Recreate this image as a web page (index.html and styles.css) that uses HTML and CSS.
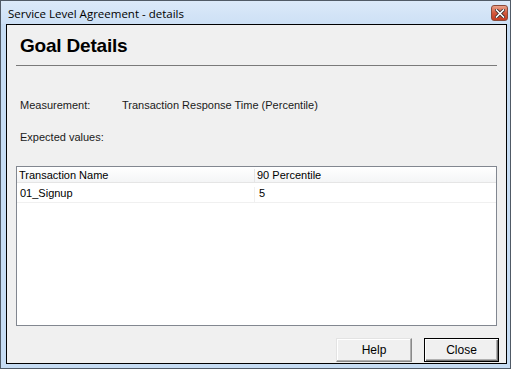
FILE: index.html
```html
<!DOCTYPE html>
<html lang="en">
<head>
    <meta charset="UTF-8">
    <title>Service Level Agreement - details</title>
    <link rel="stylesheet" href="styles.css">
</head>
<body>
    <div class="window">
        <div class="titlebar">
            <span class="title">Service Level Agreement - details</span>
            <span class="close-x">
                <svg width="10" height="9" viewBox="0 0 10 9">
                    <path d="M1.5 1 L8.5 8 M8.5 1 L1.5 8" stroke="#3a2a2a" stroke-width="3.2" stroke-linecap="square"/>
                    <path d="M1.5 1 L8.5 8 M8.5 1 L1.5 8" stroke="#fff" stroke-width="1.6" stroke-linecap="square"/>
                </svg>
            </span>
        </div>
        <div class="content">
            <h1>Goal Details</h1>
            <div class="rule"></div>

            <div class="field">
                <span class="field-label">Measurement:</span>
                <span>Transaction Response Time (Percentile)</span>
            </div>
            <div class="field expected">Expected values:</div>

            <div class="grid">
                <div class="grid-head">
                    <div class="col col-name">Transaction Name</div>
                    <div class="col col-value">90 Percentile</div>
                </div>
                <div class="grid-row">
                    <div class="col col-name">01_Signup</div>
                    <div class="col col-value">5</div>
                </div>
            </div>

            <div class="buttons">
                <button class="btn">Help</button>
                <button class="btn btn-default">Close</button>
            </div>
        </div>
    </div>
</body>
</html>
```

FILE: styles.css
```css
body {
    margin: 0;
    background: #ffffff;
    font-family: "Liberation Sans", Arial, sans-serif;
    font-size: 11px;
    color: #000;
}
.window {
    width: 511px;
    height: 369px;
    box-sizing: border-box;
    border: 1px solid #505a66;
    background: #c6dcf3;
    padding: 0 3px 4px 5px;
    display: flex;
    flex-direction: column;
}
.titlebar {
    height: 23px;
    margin: 0 -3px 0 -5px;
    padding: 0 2px 0 7px;
    display: flex;
    align-items: center;
    justify-content: space-between;
    background: linear-gradient(#dbe9f9, #cde0f5);
}
.title {
    font-family: "Open Sans", "Noto Sans", sans-serif;
    font-size: 11.5px;
    color: #000;
    padding-top: 1px;
}
.close-x {
    width: 15px;
    height: 14px;
    margin-top: 1px;
    border: 1px solid #8a4a3a;
    border-radius: 3px;
    background: linear-gradient(#e9a38c, #d4583c 50%, #c43c22);
    display: flex;
    align-items: center;
    justify-content: center;
}
.content {
    flex: 1;
    border: 1px solid #000;
    background: #f0f0f0;
    padding: 10px 9px 0;
    display: flex;
    flex-direction: column;
}
h1 {
    margin: 0;
    padding-left: 4px;
    font-size: 19px;
    line-height: 22px;
    font-weight: bold;
    letter-spacing: -0.2px;
}
.rule {
    margin-top: 8px;
    border-top: 1px solid #7a7a7a;
}
.field {
    margin-top: 33px;
    padding-left: 4px;
    line-height: 13px;
    color: #1a1a1a;
    display: flex;
}
.field-label {
    width: 102px;
}
.expected {
    margin-top: 19px;
}
.grid {
    margin-top: 22px;
    height: 160px;
    box-sizing: border-box;
    border: 1px solid #828790;
    background: #fff;
}
.grid-head, .grid-row {
    display: flex;
    line-height: 13px;
}
.grid-head {
    height: 16px;
    box-sizing: border-box;
    padding-top: 2px;
    border-bottom: 1px solid #e5e5e5;
    background: linear-gradient(#ffffff, #f4f5f6);
}
.grid-row {
    height: 20px;
    box-sizing: border-box;
    padding-top: 4px;
    border-bottom: 1px solid #f0f0f0;
}
.col-name {
    width: 238px;
    box-sizing: border-box;
    padding-left: 2px;
    border-right: 1px solid #e5e5e5;
}
.grid-row .col-name {
    padding-left: 3px;
    border-right-color: #f0f0f0;
}
.col-value {
    padding-left: 2px;
}
.grid-row .col-value {
    padding-left: 4px;
}
.buttons {
    margin-top: 12px;
    display: flex;
    justify-content: flex-end;
    gap: 12px;
    margin-right: -2px;
}
.btn {
    width: 76px;
    height: 24px;
    box-sizing: border-box;
    font-family: "Liberation Sans", Arial, sans-serif;
    font-size: 12px;
    color: #000;
    background: #f0f0f0;
    border: 1px solid;
    border-color: #e3e3e3 #8a8a8a #8a8a8a #e3e3e3;
    box-shadow: inset -1px -1px 0 #b0b0b0, inset 1px 1px 0 #ffffff;
    padding: 0;
}
.btn-default {
    width: 75px;
    border: 1px solid #000;
    box-shadow: inset 1px 1px 0 #ffffff, inset -1px -1px 0 #707070, inset -2px -2px 0 #b0b0b0;
}
```
